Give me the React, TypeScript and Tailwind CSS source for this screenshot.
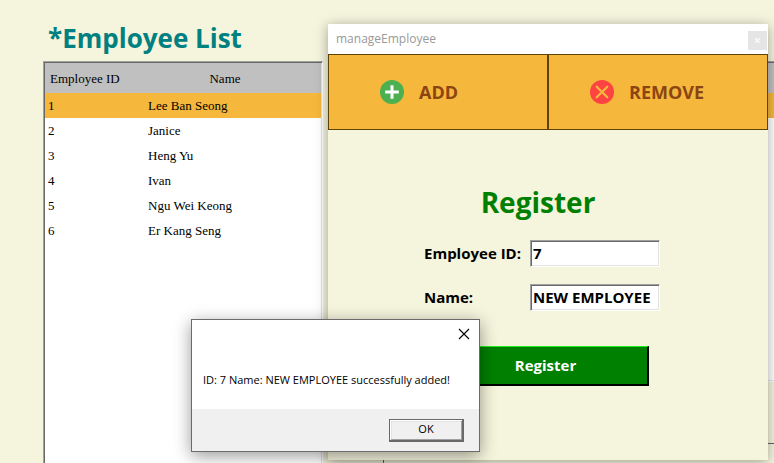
import React from "react";

const employees = [
  { id: 1, name: "Lee Ban Seong" },
  { id: 2, name: "Janice" },
  { id: 3, name: "Heng Yu" },
  { id: 4, name: "Ivan" },
  { id: 5, name: "Ngu Wei Keong" },
  { id: 6, name: "Er Kang Seng" },
];

const sunken =
  "border border-t-[#a0a0a0] border-l-[#a0a0a0] border-r-white border-b-white shadow-[inset_1px_1px_0_#696969,inset_-1px_-1px_0_#e3e3e3]";

const fieldClass =
  "h-[27px] w-[130px] bg-white pl-[2px] pb-px text-[15px] font-bold text-black outline-none " + sunken;

function EmployeeTable() {
  return (
    <div className={"-mb-1 w-[280px] shrink-0 bg-white p-[2px] pb-0 " + sunken}>
      <table className="-mt-px -ml-px w-[276px] table-fixed border-collapse font-['Liberation_Serif',serif] text-[13px] text-black">
        <colgroup>
          <col className="w-[100px]" />
          <col />
        </colgroup>
        <thead>
          <tr className="h-[30px] bg-[#c0c0c0]">
            <th className="pt-[2px] pl-[5px] text-left font-normal">Employee ID</th>
            <th className="pt-[2px] pr-4 text-center font-normal">Name</th>
          </tr>
        </thead>
        <tbody>
          {employees.map((e, i) => (
            <tr key={e.id} className={i === 0 ? "h-[25px] bg-[#f6b83c]" : "h-[25px]"}>
              <td className="pl-[3px]">{e.id}</td>
              <td className="pl-[3px]">{e.name}</td>
            </tr>
          ))}
        </tbody>
      </table>
    </div>
  );
}

function AddIcon() {
  return (
    <svg className="size-6 shrink-0" viewBox="0 0 24 24" aria-hidden="true">
      <circle cx="12" cy="12" r="12" fill="#4caf50" />
      <path d="M12 5.2v13.6M5.2 12h13.6" stroke="#fff" strokeWidth="3" />
    </svg>
  );
}

function RemoveIcon() {
  return (
    <svg className="size-6 shrink-0" viewBox="0 0 24 24" aria-hidden="true">
      <circle cx="12" cy="12" r="12" fill="#fd4443" />
      <path d="M6.7 6.7l10.6 10.6M17.3 6.7L6.7 17.3" stroke="#f6b83c" strokeWidth="2.2" strokeLinecap="round" />
    </svg>
  );
}

function ManageWindow() {
  return (
    <section className="absolute top-6 left-[328px] flex h-[436px] w-[440px] flex-col bg-[#f5f4dc] shadow-[0_2px_12px_rgba(0,0,0,0.35)]">
      <header className="flex h-[30px] shrink-0 items-end justify-between bg-white pr-px pb-1 pl-2">
        <span className="text-[12px] leading-[22px] text-[#999999]">manageEmployee</span>
        <button aria-label="Close window" className="flex size-[19px] items-center justify-center bg-[#e5e5e5] text-[#f8f8f8]">
          <svg className="size-[5px]" viewBox="0 0 5 5" aria-hidden="true">
            <path d="M0 0l5 5M5 0L0 5" stroke="currentColor" strokeWidth="1.6" />
          </svg>
        </button>
      </header>
      <nav className="grid h-[76px] shrink-0 grid-cols-2 text-[18px] font-bold text-[#8b4513]">
        <button className="flex items-center gap-[15px] border border-[#5f4306] bg-[#f6b83c] pl-[51px]">
          <AddIcon />
          ADD
        </button>
        <button className="flex items-center gap-[15px] border border-[#5f4306] bg-[#f6b83c] pl-[41px]">
          <RemoveIcon />
          REMOVE
        </button>
      </nav>
      <form className="flex flex-col pt-[52px] pl-24" onSubmit={(e) => e.preventDefault()}>
        <h2 className="w-[228px] pb-[18px] text-center text-[28px] leading-[40px] font-bold text-[#008000]">Register</h2>
        <div className="grid grid-cols-[106px_130px] items-center gap-y-[17px] text-[15px] font-bold text-black">
          <label htmlFor="employee-id">Employee ID:</label>
          <input id="employee-id" defaultValue="7" className={fieldClass} />
          <label htmlFor="employee-name">Name:</label>
          <input id="employee-name" defaultValue="NEW EMPLOYEE" className={fieldClass} />
        </div>
        <button
          type="submit"
          className="mt-[35px] ml-[19px] h-10 w-[206px] border-t border-r-2 border-b-2 border-l border-t-[#20f020] border-r-black border-b-black border-l-[#20f020] bg-[#008000] text-[15px] font-bold text-white"
        >
          Register
        </button>
      </form>
    </section>
  );
}

function MessageDialog() {
  return (
    <div
      role="dialog"
      aria-label="Message"
      className="absolute top-[319px] left-[191px] flex h-[133px] w-[289px] flex-col border border-[#6b6b6b] bg-white shadow-[0_4px_16px_rgba(0,0,0,0.4)]"
    >
      <div className="flex justify-end pt-2 pr-[9px]">
        <button aria-label="Close message" className="text-black">
          <svg className="size-3" viewBox="0 0 12 12" aria-hidden="true">
            <path d="M1 1l10 10M11 1L1 11" stroke="currentColor" strokeWidth="1.1" />
          </svg>
        </button>
      </div>
      <p className="flex-1 pt-8 pl-[11px] text-[11px] leading-4 text-black">
        ID: 7 Name: NEW EMPLOYEE successfully added!
      </p>
      <footer className="flex h-[42px] shrink-0 items-center justify-end bg-[#f0f0f0] pr-[15px]">
        <button className="h-[23px] w-[75px] border border-r-2 border-b-2 border-[#696969] bg-[#f0f0f0] text-[11px] text-black shadow-[inset_1px_1px_0_#ffffff,inset_-1px_-1px_0_#a0a0a0,inset_2px_2px_0_#e3e3e3]">
          OK
        </button>
      </footer>
    </div>
  );
}

export default function App() {
  return (
    <main className="relative flex h-screen flex-col overflow-hidden bg-[#f5f4dc] font-['Open_Sans','Noto_Sans',sans-serif]">
      <h1 className="pt-[18px] pb-[3px] pl-12 text-[26px] leading-[40px] font-bold text-[#008080]">*Employee List</h1>
      <div className="flex flex-1 pl-[43px]">
        <EmployeeTable />
        <div className="-mr-1 ml-[60px] flex flex-1 flex-col">
          <div className={"h-[321px] bg-white p-px " + sunken}>
            <div className="h-[30px] bg-[#c0c0c0]" />
            <div className="h-[25px] bg-[#f6b83c]" />
          </div>
          <div className="mt-[61px] flex-1 border-t border-l border-[#646464]" />
        </div>
      </div>
      <ManageWindow />
      <MessageDialog />
    </main>
  );
}
